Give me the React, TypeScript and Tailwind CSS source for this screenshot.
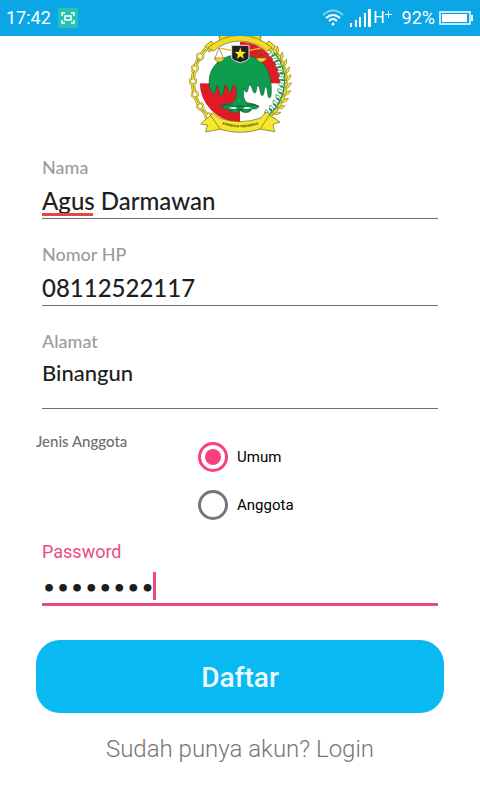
import { useState } from 'react'
import type { ReactNode } from 'react'

const CHAIN = Array.from({ length: 12 }, (_, i) => 132 + i * 8)
const GRAINS = Array.from({ length: 11 }, (_, i) => -41 + i * 9)
const TEETH = [-130, -110, -90, -70, -50]

function Emblem() {
  return (
    <svg viewBox="0 18 360 300" className="h-[100px] w-[120px]" role="img" aria-label="Koperasi Indonesia">
      <defs>
        <clipPath id="disc">
          <circle cx="180" cy="156" r="121" />
        </clipPath>
      </defs>
      {/* quartered disc */}
      <g clipPath="url(#disc)">
        <rect x="56" y="30" width="250" height="250" fill="#fff" />
        <rect x="180" y="30" width="126" height="130" fill="#e01b26" />
        <rect x="56" y="160" width="124" height="124" fill="#e01b26" />
      </g>
      {/* gear rim */}
      {TEETH.map((angle) => (
        <rect
          key={angle}
          x="128" y="-13" width="22" height="26"
          transform={`translate(180 156) rotate(${angle})`}
          fill="#f5dc23" stroke="#6b6418" strokeWidth="2"
        />
      ))}
      <path
        d="M84 54 A140 140 0 0 1 276 54 L260 63 A122 122 0 0 0 100 63Z"
        fill="#f5dc23" stroke="#6b6418" strokeWidth="2"
      />
      {/* tree */}
      <path
        d="M180 74 C216 74 245 88 261 116 C272 138 276 168 273 198 Q268 210 264 197 L261 176 255 168 251 192 Q246 203 242 191 L238 171 232 166 228 185 Q223 194 219 183 L214 168 207 165 203 183 Q199 191 195 182 L192 176 C189 196 190 211 202 218 Q221 220 237 229 Q231 240 218 236 L207 246 Q193 251 181 242 Q168 251 153 246 L143 236 Q129 240 122 229 Q139 219 157 218 C170 210 171 193 168 176 L164 166 158 165 153 184 Q149 192 145 182 L140 167 134 166 129 192 Q124 202 119 191 L115 170 110 167 105 188 Q101 197 97 187 L88 172 C86 150 88 130 99 114 C116 86 146 74 180 74Z"
        fill="#0d9b4d" stroke="#166137" strokeWidth="2"
      />
      <path
        d="M124 229 Q145 219 164 231 Q180 224 196 231 Q216 219 236 229 M148 243 Q164 231 180 240 Q197 231 213 243"
        fill="none" stroke="#0c3d22" strokeWidth="2"
      />
      <path d="M146 235 Q162 225 174 235 Q162 240 146 235Z M187 235 Q199 225 215 235 Q199 240 187 235Z" fill="#e8f4ec" />
      {/* scales */}
      <g fill="none" stroke="#8a6d14" strokeWidth="2">
        <path d="M117 54 158 62 M204 62 244 54" stroke="#e7b92f" strokeWidth="4" />
        <path d="M117 54 105 84 M117 54 130 84 M244 54 231 84 M244 54 257 84" />
        <path d="M102 84 H133 Q128 96 117 96 Q107 96 102 84Z M229 84 H260 Q254 96 244 96 Q234 96 229 84Z" fill="#f5dc23" />
      </g>
      <path d="M155 46 H207 V84 Q204 92 181 98 Q158 92 155 84Z" fill="#202020" stroke="#e4e4e4" strokeWidth="3" />
      <path d="M181 52 185 65 198 66 188 74 192 87 181 79 170 87 174 74 164 66 177 65Z" fill="#f7e927" />
      {/* chain */}
      {CHAIN.map((angle, i) => (
        <g key={angle} transform={`translate(180 154) rotate(${angle}) translate(141 0)`} fill="none">
          <ellipse rx={i % 2 ? 3 : 9} ry="11" stroke="#6b6418" strokeWidth="6" />
          <ellipse rx={i % 2 ? 3 : 9} ry="11" stroke="#f5e23c" strokeWidth="4" />
        </g>
      ))}
      {/* cotton and rice */}
      <path d="M282 66 A134 134 0 0 1 270 252" fill="none" stroke="#0d8b47" strokeWidth="4" />
      {GRAINS.map((angle) => (
        <g key={angle} transform={`translate(180 154) rotate(${angle})`} strokeWidth="2">
          <path d="M134 8 Q118 12 115 -3 Q130 -8 134 8Z" fill="#fff" stroke="#26804b" />
          <path d="M134 9 Q124 13 119 4 Q128 0 134 9Z" fill="#159b50" />
          <path d="M136 11 Q131 -2 141 -10 Q147 2 136 11Z" fill="#f5e62e" stroke="#8f8726" />
          <path d="M138 12 Q142 -4 154 -7 Q153 8 138 12Z" fill="#f5e62e" stroke="#8f8726" />
        </g>
      ))}
      {/* ribbon */}
      <g fill="#f5e62e" stroke="#6b6418" strokeWidth="2">
        <path d="M96 254 84 262 62 282 82 285 77 306 128 296 130 272Z" />
        <path d="M264 254 276 260 300 276 279 283 284 305 234 296 230 272Z" />
        <path d="M98 248 118 264 Q180 286 242 264 L258 246 270 252 240 298 Q180 316 121 298 L92 256Z" />
      </g>
      <path id="motto" d="M118 280 Q180 304 244 280" fill="none" />
      <text fontFamily="Liberation Sans, sans-serif" fontSize="10" fontWeight="700" fill="#3a3912" textAnchor="middle">
        <textPath href="#motto" startOffset="50%">KOPERASI INDONESIA</textPath>
      </text>
    </svg>
  )
}

function StatusBar() {
  return (
    <header className="flex h-9 items-center bg-[#0ba6e5] pr-1.5 pl-1.5 font-[Roboto,sans-serif] text-lg text-white">
      <span>17:42</span>
      <svg viewBox="0 0 20 20" className="ml-[7px] h-5 w-5" fill="none" stroke="#fff" strokeWidth="1.5">
        <rect width="20" height="20" fill="#27c3b1" stroke="none" />
        <path d="M4 8 V5 H7 M13 5 H16 V8 M16 12 V15 H13 M7 15 H4 V12" />
        <rect x="7" y="8" width="6" height="4" />
      </svg>
      <svg viewBox="0 0 22 18" className="ml-auto h-[18px] w-[22px]" fill="none" stroke="#fff" strokeWidth="2">
        <path d="M1 6 Q11 -3 21 6" opacity=".5" />
        <path d="M4 9 Q11 3 18 9 M7 12 Q11 8 15 12" />
        <circle cx="11" cy="15" r="1.5" fill="#fff" stroke="none" />
      </svg>
      <svg viewBox="0 0 22 20" className="ml-1.5 h-5 w-[22px]" fill="#fff">
        <path d="M0 15h2v4H0zM5 12h2v7H5zM9 9h2v10H9zM14 5h2v14h-2zM18 1h3v18h-3z" />
      </svg>
      <span className="ml-px text-base">H</span>
      <svg viewBox="0 0 7 7" className="mb-2 size-[7px]" stroke="#fff">
        <path d="M0 3.5H7M3.5 0V7" />
      </svg>
      <span className="ml-2.5">92%</span>
      <svg viewBox="0 0 35 14" className="ml-1 h-3.5 w-[35px]" fill="#fff">
        <rect x="1" y="1" width="30" height="12" fill="none" stroke="#fff" strokeWidth="1.5" />
        <rect x="3" y="3" width="25" height="8" />
        <rect x="32" y="4" width="2" height="6" />
      </svg>
    </header>
  )
}

function Field({ id, label, children }: { id: string; label: string; children: ReactNode }) {
  return (
    <div className="relative mx-1.5 border-b border-[#6f6f6f]">
      <label htmlFor={id} className="block text-lg leading-[26px] font-medium text-[#9c9c9c]">{label}</label>
      {children}
    </div>
  )
}

const inputClass = 'block h-[38px] w-full bg-transparent pt-0.5 text-2xl font-medium text-[#1e1e1e] outline-none'

export default function App() {
  const [name, setName] = useState('Agus Darmawan')
  const [phone, setPhone] = useState('08112522117')
  const [address, setAddress] = useState('Binangun')
  const [memberType, setMemberType] = useState('Umum')
  const [password, setPassword] = useState('rahasia1')

  return (
    <div className="min-h-screen bg-white font-[Lato,sans-serif]">
      <StatusBar />
      <main className="px-9 pb-8">
        <div className="flex justify-center">
          <Emblem />
        </div>
        <form onSubmit={(e) => e.preventDefault()}>
          <div className="mt-[18px] flex flex-col gap-[22px]">
            <Field id="nama" label="Nama">
              <input id="nama" className={inputClass} value={name} onChange={(e) => setName(e.target.value)} />
              {name.startsWith('Agus') && <span className="absolute bottom-0.5 left-0 h-[3px] w-[51px] bg-[#e04848]" />}
            </Field>
            <Field id="hp" label="Nomor HP">
              <input id="hp" type="tel" className={inputClass} value={phone} onChange={(e) => setPhone(e.target.value)} />
            </Field>
            <Field id="alamat" label="Alamat">
              <textarea
                id="alamat"
                className="block h-[54px] w-full resize-none bg-transparent py-[5px] text-[22px] leading-7 font-medium text-[#1e1e1e] outline-none"
                value={address}
                onChange={(e) => setAddress(e.target.value)}
              />
            </Field>
          </div>

          <fieldset className="mt-6 flex">
            <legend className="float-left w-40 text-[15px] leading-4 font-medium text-[#6f6f6f]">Jenis Anggota</legend>
            <div className="flex flex-col">
              {['Umum', 'Anggota'].map((type) => (
                <label key={type} className="flex h-12 items-center gap-[7px] font-[Roboto,sans-serif] text-[15px] text-black">
                  <input
                    type="radio"
                    name="jenis"
                    checked={memberType === type}
                    onChange={() => setMemberType(type)}
                    className="mx-0.5 size-[30px] appearance-none rounded-full border-3 border-[#767676] bg-clip-content p-1 checked:border-[#f8427f] checked:bg-[#f8427f]"
                  />
                  {type}
                </label>
              ))}
            </div>
          </fieldset>

          <div className="relative mx-1.5 mt-[11px] border-b-3 border-[#ea4a84]">
            <label htmlFor="password" className="block font-[Roboto,sans-serif] text-lg leading-6 text-[#ea4a84]">Password</label>
            <input
              id="password"
              type="password"
              className="block h-[39px] w-full bg-transparent pt-2.5 font-['DejaVu_Sans',sans-serif] text-[22px] font-bold text-[#1e1e1e] caret-transparent outline-none"
              value={password}
              onChange={(e) => setPassword(e.target.value)}
            />
            <span className="absolute bottom-[3px] left-[111px] h-7 w-[3px] bg-[#ea4a84]" />
          </div>

          <button
            type="submit"
            className="mt-[34px] block h-[73px] w-full rounded-3xl bg-[#09baf2] pt-0.5 font-[Roboto,sans-serif] text-[28px] font-medium text-[#eafaff]"
          >
            Daftar
          </button>
        </form>
        <p className="mt-5 text-center font-[Roboto,sans-serif] text-2xl font-light text-[#767676]">
          <a href="#login">Sudah punya akun? Login</a>
        </p>
      </main>
    </div>
  )
}
